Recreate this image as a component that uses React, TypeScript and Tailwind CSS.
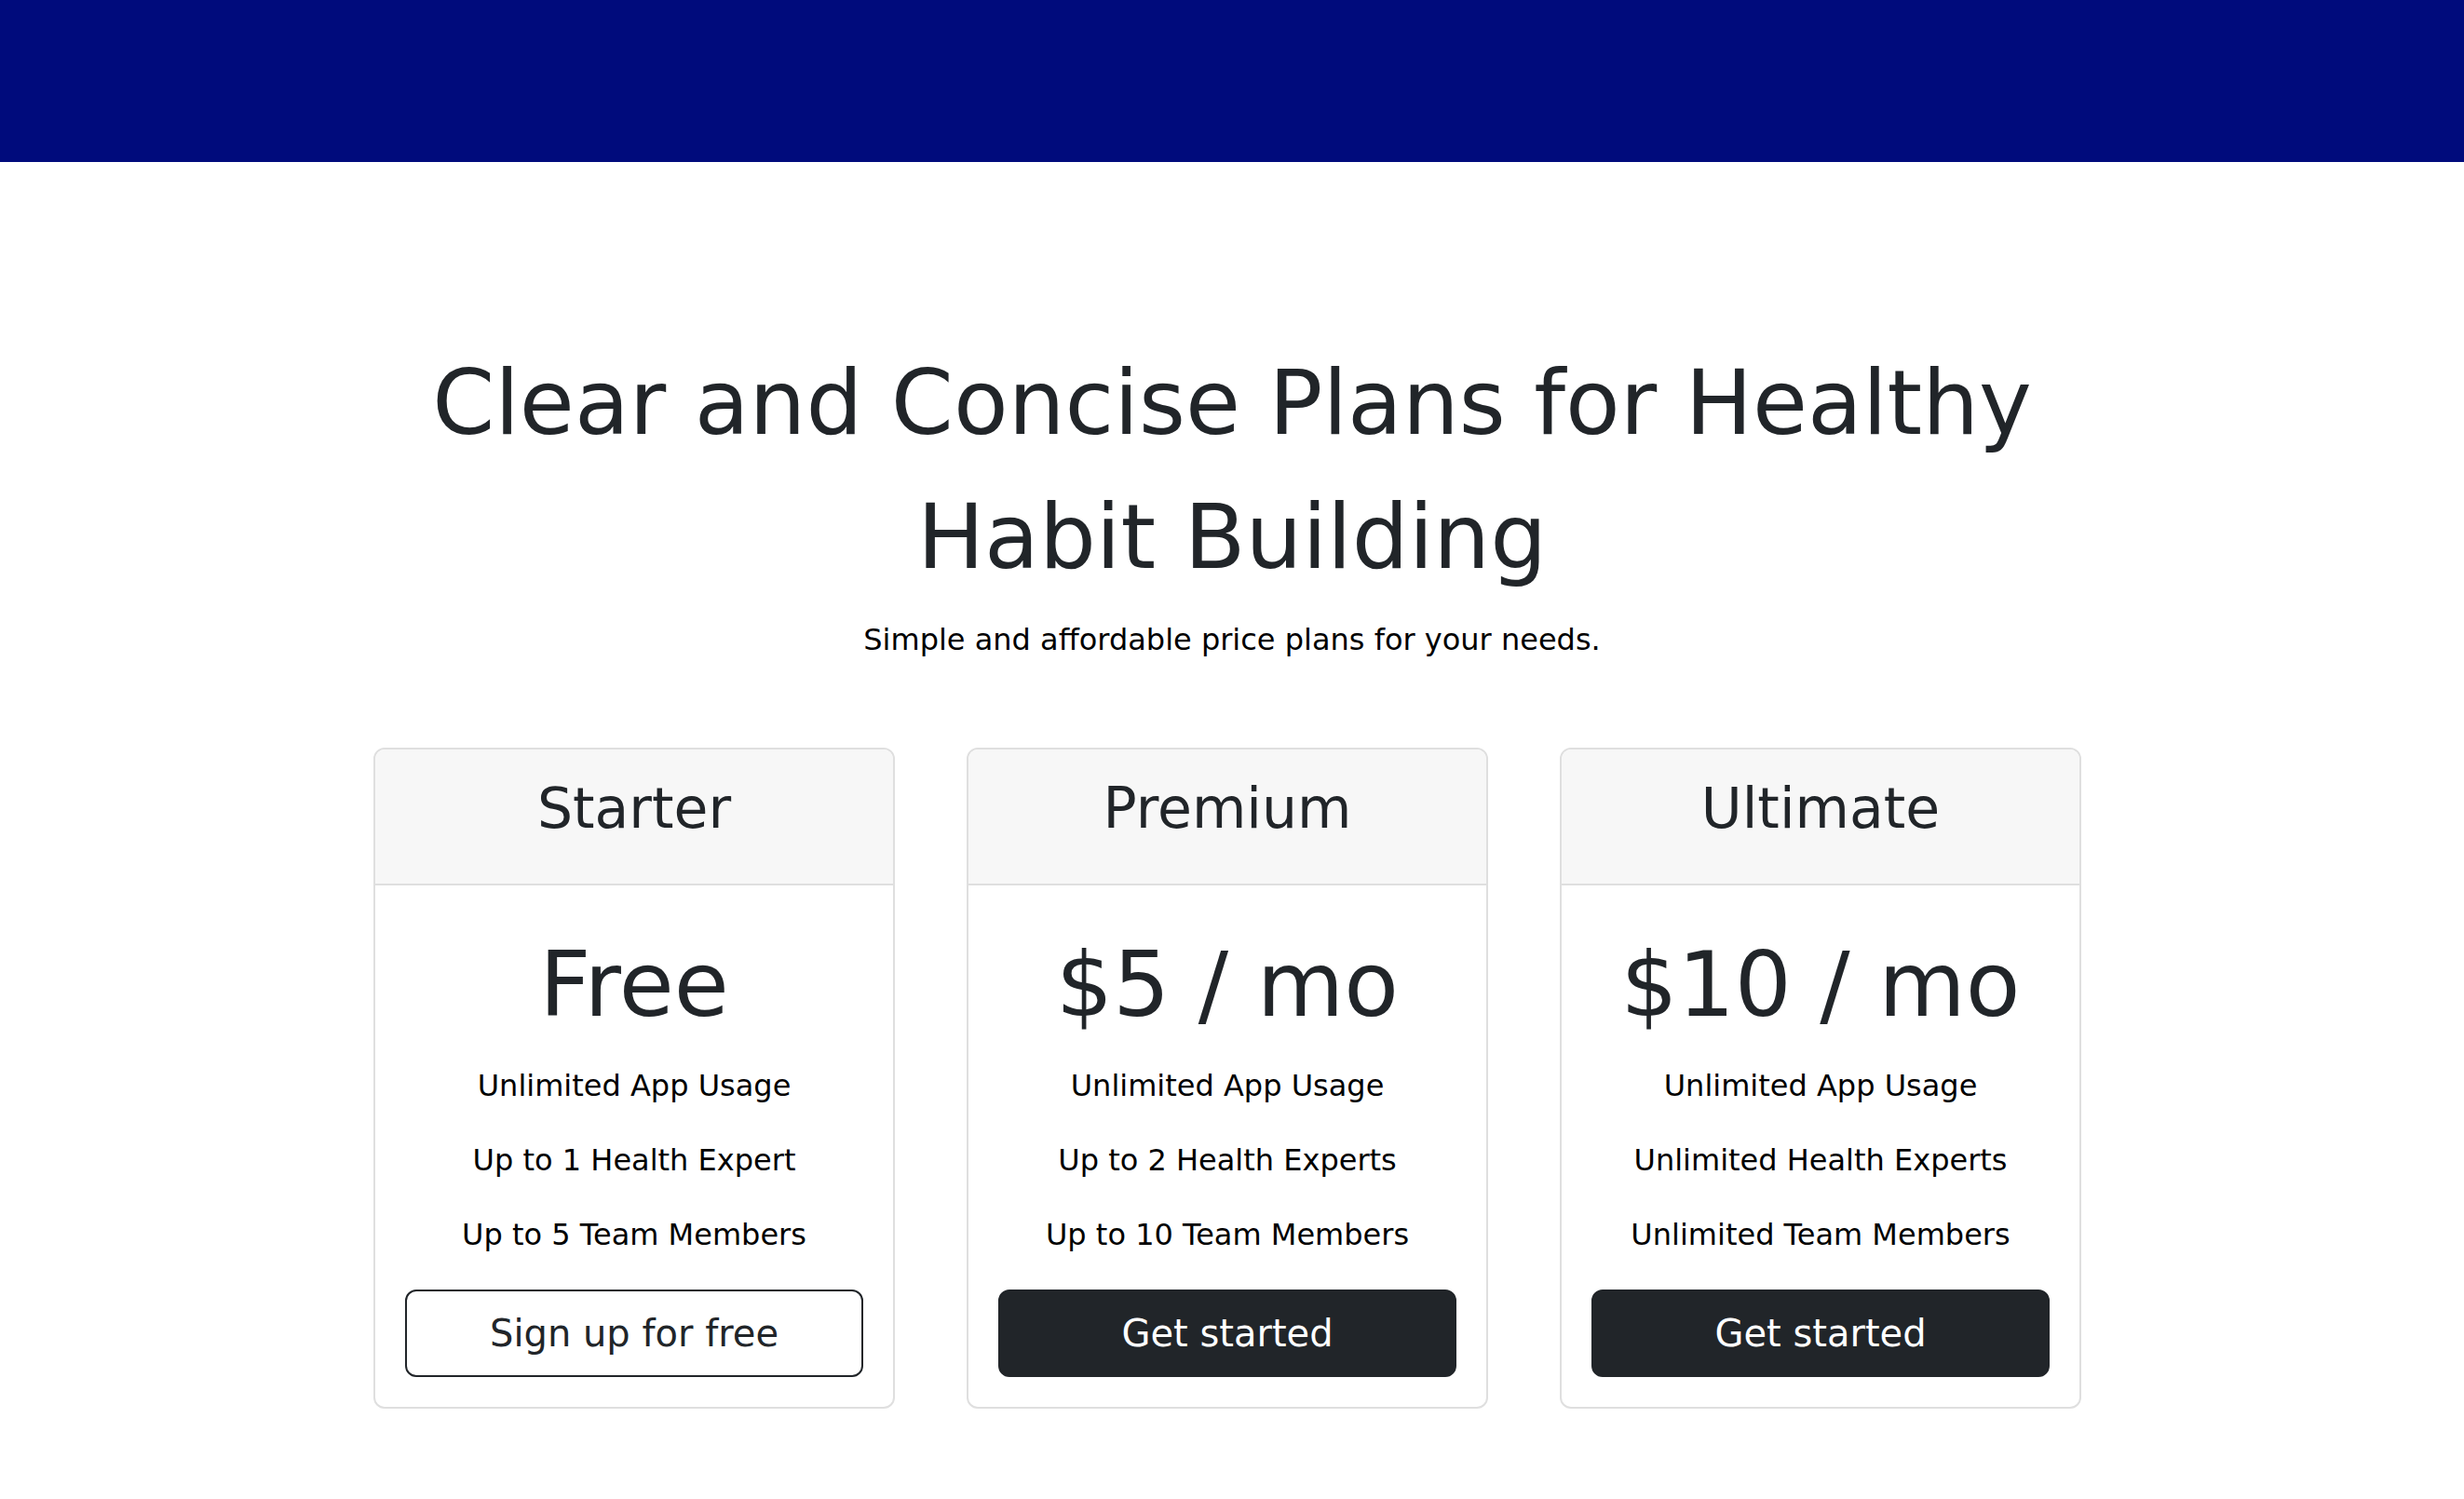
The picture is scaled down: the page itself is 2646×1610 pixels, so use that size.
import React from 'react';

const plans = [
  {
    name: 'Starter',
    price: 'Free',
    features: ['Unlimited App Usage', 'Up to 1 Health Expert', 'Up to 5 Team Members'],
    cta: 'Sign up for free',
    outline: true,
  },
  {
    name: 'Premium',
    price: '$5 / mo',
    features: ['Unlimited App Usage', 'Up to 2 Health Experts', 'Up to 10 Team Members'],
    cta: 'Get started',
    outline: false,
  },
  {
    name: 'Ultimate',
    price: '$10 / mo',
    features: ['Unlimited App Usage', 'Unlimited Health Experts', 'Unlimited Team Members'],
    cta: 'Get started',
    outline: false,
  },
];

const PlanCard = ({ plan }: { plan: (typeof plans)[number] }) => (
  <div className="w-[560px] border-2 border-[#dfdfdf] rounded-[12px] overflow-hidden bg-white flex flex-col">
    <div className="h-[146px] bg-[#f7f7f7] border-b-2 border-[#dfdfdf] pt-[27px] text-center">
      <h4 className="text-[60px] leading-[72px] text-[#212529] font-normal">{plan.name}</h4>
    </div>
    <div className="px-[32px] pt-[47px] pb-[32px] text-center">
      <h1 className="text-[96px] leading-[120px] text-[#212529] font-normal">{plan.price}</h1>
      <ul className="mt-[24px] flex flex-col gap-[32px]">
        {plan.features.map((f) => (
          <li key={f} className="text-[32px] leading-[48px] text-black">
            {f}
          </li>
        ))}
      </ul>
      <button
        className={
          plan.outline
            ? 'mt-[35px] w-full h-[94px] rounded-[12px] border-2 border-[#212529] bg-white text-[#212529] text-[40px] leading-[60px] flex items-center justify-center'
            : 'mt-[35px] w-full h-[94px] rounded-[12px] border-2 border-[#212529] bg-[#212529] text-white text-[40px] leading-[60px] flex items-center justify-center'
        }
      >
        {plan.cta}
      </button>
    </div>
  </div>
);

export default function App() {
  return (
    <div className="min-h-[1610px] bg-white font-['DejaVu_Sans',sans-serif]">
      <header className="h-[174px] bg-[#000b7c]" />
      <main className="flex flex-col items-center">
        <h1 className="mt-[187px] w-[1900px] text-center text-[96px] leading-[144px] text-[#212529] font-normal">
          Clear and Concise Plans for Healthy Habit Building
        </h1>
        <p className="mt-[14px] text-[32px] leading-[48px] text-black">
          Simple and affordable price plans for your needs.
        </p>
        <div className="mt-[92px] pr-[10px] flex justify-center gap-[77px]">
          {plans.map((p) => (
            <PlanCard key={p.name} plan={p} />
          ))}
        </div>
      </main>
    </div>
  );
}
